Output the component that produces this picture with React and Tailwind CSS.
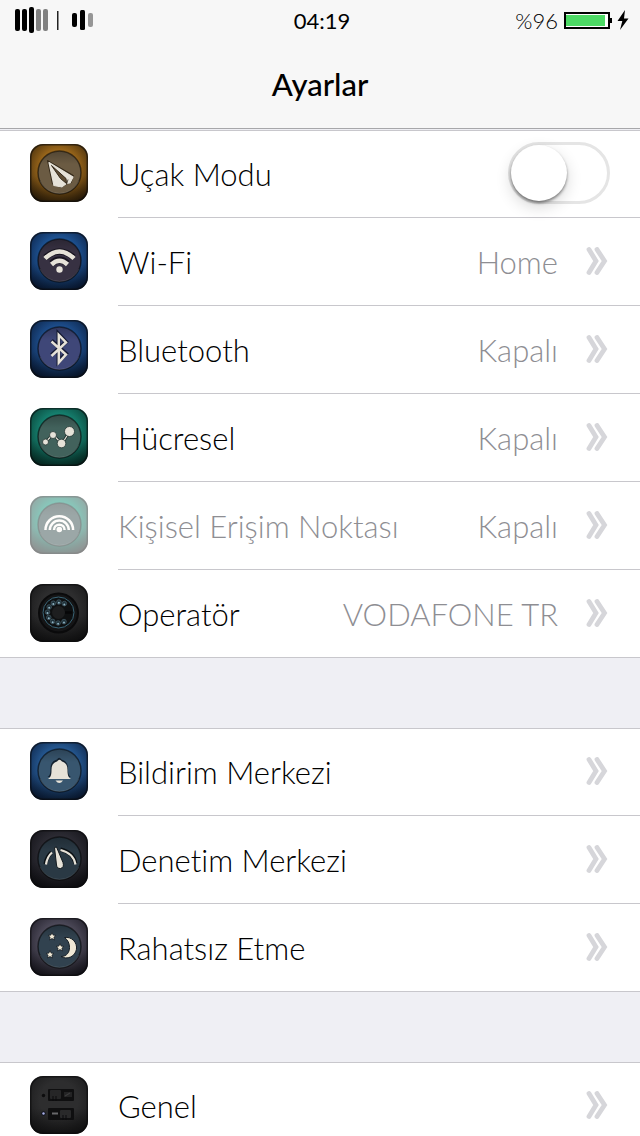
import React from 'react';

const CREAM = '#e6e2d8';

function Tile({ id, outer, edge, disc, ring = true, children }) {
  return (
    <svg viewBox="0 0 58 58" className="size-[58px] shrink-0" aria-hidden="true">
      <defs>
        <radialGradient id={id + '-bg'} cx="50%" cy="42%" r="66%">
          <stop offset="0.5" stopColor={outer} />
          <stop offset="1" stopColor={edge} />
        </radialGradient>
        <linearGradient id={id + '-fade'} x1="0" y1="0" x2="0" y2="1">
          <stop offset="0.55" stopColor="#000" stopOpacity="0" />
          <stop offset="1" stopColor="#000" stopOpacity="0.42" />
        </linearGradient>
        <linearGradient id={id + '-disc'} x1="0" y1="0" x2="0" y2="1">
          <stop offset="0" stopColor="#000" stopOpacity="0.22" />
          <stop offset="0.3" stopColor="#000" stopOpacity="0" />
        </linearGradient>
      </defs>
      <rect width="58" height="58" rx="13" fill={`url(#${id}-bg)`} />
      <rect width="58" height="58" rx="13" fill={`url(#${id}-fade)`} />
      <rect x="0.75" y="0.75" width="56.5" height="56.5" rx="12.5" fill="none" stroke="#0a0a0c" strokeOpacity="0.6" strokeWidth="1.5" />
      {ring && (
        <>
          <circle cx="29.5" cy="28.5" r="21.5" fill={disc} stroke="#000" strokeOpacity="0.55" strokeWidth="1.5" />
          <circle cx="29.5" cy="28.5" r="21" fill={`url(#${id}-disc)`} />
          <path d="M10 37a21.5 21.5 0 0 0 39 0" fill="none" stroke="#fff" strokeOpacity="0.12" strokeWidth="1" />
        </>
      )}
      {children}
    </svg>
  );
}

const dialHoles = [60, 92, 122, 152, 182, 212, 242, 272, 302].map((deg) => {
  const a = (deg * Math.PI) / 180;
  return { cx: 28.5 + 11 * Math.cos(a), cy: 28.5 + 10.5 * Math.sin(a) };
});

const icons = {
  plane: (
    <Tile id="plane" outer="#98651a" edge="#3a260b" disc="#6b5b43">
      <path d="M17.500 16.500 43.500 31.500 41 39 37.500 39.500 31 43.500 22.500 40Z" fill="#2a2012" opacity="0.8" stroke="#2a2012" strokeLinejoin="round" />
      <path d="M19 18.500 43 33 40 39 36.500 39.500 31.500 43 24 41.500Z" fill={CREAM} stroke={CREAM} strokeWidth="1.200" strokeLinejoin="round" />
      <path d="M21.500 21.500 36 34.500 36.500 39.500 30.500 34.500Z" fill="#5e4c33" stroke="#33281a" strokeWidth="1" strokeLinejoin="round" />
      <path d="M36.500 40.500 38 35.500" stroke="#33281a" strokeWidth="0.800" />
    </Tile>
  ),
  wifi: (
    <Tile id="wifi" outer="#1d5190" edge="#0b1f42" disc="#373142">
      <g fill="none" stroke="#17131f" strokeWidth="6.500">
        <path d="M15.500 25.500q14-12 28 0M21.500 31.500q8-7 16 0" />
      </g>
      <g fill="none" stroke={CREAM} strokeWidth="4.500">
        <path d="M15 26.500q14.500-14 29 0M21.500 32.500q8-7.500 16 0" />
      </g>
      <circle cx="29.500" cy="37.500" r="3.200" fill={CREAM} />
    </Tile>
  ),
  bluetooth: (
    <Tile id="bt" outer="#1c4b88" edge="#0a1d3c" disc="#3f4778">
      <path d="M21.500 20.500 36 33.500 28.500 41.500V14L36 22 21.500 35" fill="none" stroke="#151a33" strokeWidth="4" />
      <path d="M21.500 21.500 36 34.500 28.800 42.500V15L36 22.500 21.500 36" fill="none" stroke={CREAM} strokeWidth="2.500" />
    </Tile>
  ),
  cellular: (
    <Tile id="cell" outer="#157e6d" edge="#08392f" disc="#42625c">
      <path d="M15.500 34 23 26.500 32 36 39.500 23.500" fill="none" stroke="#1d2e2b" strokeWidth="2.800" />
      <path d="M15.500 34 23 26.500 32 36 39.500 23.500" fill="none" stroke={CREAM} strokeWidth="1.200" />
      <g fill={CREAM} stroke="#243633" strokeWidth="0.800">
        <circle cx="15.500" cy="34" r="3" />
        <circle cx="23" cy="27" r="3.500" />
        <circle cx="31.500" cy="35.500" r="4.300" />
        <circle cx="39.500" cy="23.500" r="5" />
      </g>
    </Tile>
  ),
  hotspot: (
    <Tile id="hot" outer="#149078" edge="#343f3e" disc="#3a5252">
      <g fill="none" stroke="#fffdf8" strokeWidth="2.500">
        <path d="M15.500 34a13.800 13.800 0 0 1 27.600 0M19.800 34a9.500 9.500 0 0 1 19 0M24 34a5.300 5.300 0 0 1 10.600 0" />
      </g>
      <circle cx="29.300" cy="33.500" r="2.800" fill="#fffdf8" />
    </Tile>
  ),
  operator: (
    <Tile id="op" outer="#2d2d2e" edge="#161617" ring={false}>
      <circle cx="28.500" cy="29" r="19.500" fill="#151516" stroke="#0a0a0b" strokeWidth="2" />
      <circle cx="28.500" cy="28.500" r="15.500" fill="#0e1011" stroke="#3a6577" strokeWidth="1" />
      {dialHoles.map((hole) => (
        <g key={hole.cx}>
          <circle cx={hole.cx} cy={hole.cy} r="2.300" fill="#1e3038" stroke="#47606b" strokeWidth="0.700" />
          <circle cx={hole.cx} cy={hole.cy + 0.8} r="1" fill="#8fb4c4" />
        </g>
      ))}
      <circle cx="28.500" cy="28.500" r="6.500" fill="#1d1e1f" />
      <path d="M35 28.500h7" stroke="#060607" strokeWidth="2.500" />
    </Tile>
  ),
  bell: (
    <Tile id="bell" outer="#24568e" edge="#0c2143" disc="#38566f">
      <path d="M17.500 36c2.500-1.500 3-3.500 3-8.500 0-5 2.500-8 6.500-9q2-3.500 4.500 0c4 1 6.500 4 6.500 9 0 5 .5 7 3 8.500Z" fill="#14212e" transform="translate(0 -1)" />
      <path d="M18 37c3-1.800 3.500-4.500 3.500-9 0-5 2-7.500 5.500-8.500q2.500-3.500 5 0c3.500 1 5.500 3.500 5.500 8.500 0 4.500.5 7.200 3.500 9ZM25.500 38.500h7.500q-3.700 5-7.500 0Z" fill={CREAM} />
    </Tile>
  ),
  gauge: (
    <Tile id="gauge" outer="#2b2a32" edge="#121217" disc="#2a3944">
      <path d="M15.500 34q1-7.500 6-11.500M30.500 19.500q13 3 15 14" fill="none" stroke="#0a0f13" strokeWidth="4" />
      <path d="M16 34.500q1-7.500 6-12M30.500 20q13 3 15 14.500" fill="none" stroke={CREAM} strokeWidth="2.200" />
      <path d="M24.500 17.500 26.500 17 33 32.500q1.500 5-2.500 6-3.500.3-4-3.500Z" fill={CREAM} stroke="#10171c" strokeWidth="1" />
    </Tile>
  ),
  moon: (
    <Tile id="moon" outer="#4b4857" edge="#1d1b25" disc="#31424f">
      <path d="M34.500 19.500a10.300 10.300 0 1 1-3.500 19c6 0 8.500-4.500 8.500-9 0-4-1.500-7.500-5-10Z" fill="#efe8d5" stroke="#141c23" strokeWidth="1" />
      <g fill="#efe8d5" stroke="#141c23" strokeWidth="0.800">
        <path d="m22 14.500 1.200 2.600 2.800.3-2.100 1.900.6 2.700-2.500-1.400-2.500 1.400.6-2.700-2.100-1.900 2.800-.3Z" />
        <path d="m30 25.500 1.200 2.600 2.800.3-2.100 1.900.6 2.700-2.500-1.400-2.500 1.400.6-2.700-2.100-1.900 2.800-.3Z" />
        <path d="m20 32.500 1.200 2.600 2.800.3-2.100 1.900.6 2.700-2.500-1.400-2.500 1.400.6-2.700-2.100-1.900 2.800-.3Z" />
      </g>
    </Tile>
  ),
  general: (
    <Tile id="gen" outer="#2d2d2e" edge="#19191a" ring={false}>
      <rect x="18" y="13" width="26" height="12" rx="1" fill="#0f0f10" />
      <rect x="20" y="14" width="11" height="9" rx="1" fill="#262627" />
      <rect x="34" y="16" width="8" height="5" fill="#232324" />
      <rect x="18" y="32" width="26" height="12" rx="1" fill="#0f0f10" />
      <rect x="30" y="34" width="11" height="8" rx="1" fill="#29292a" />
      <path d="M23 20v5M26 20v5M33 39v5M36 39v5" stroke="#0b0b0c" />
      <path d="M35 20l5-3" stroke="#3c3c3e" strokeWidth="1.200" />
      <path d="M22 37.500h6" stroke="#68686a" strokeWidth="2" />
      <circle cx="13.500" cy="19.500" r="1.700" fill="#0c0c0d" />
      <circle cx="13.500" cy="37.500" r="2.200" fill="#10131f" />
      <circle cx="13.500" cy="37.500" r="1.200" fill="#a9b0e6" />
    </Tile>
  ),
};

function Chevrons() {
  return (
    <svg viewBox="0 0 22 30" className="ml-7 h-[30px] w-[22px] shrink-0" aria-hidden="true">
      <path d="M3 2.500 10 14 3 25.500M11 2.500 18.500 14 11 25.500" fill="none" stroke="#d6d6da" strokeWidth="4.800" strokeLinecap="round" />
    </svg>
  );
}

function Row({ icon, label, value, dimmed, toggle }) {
  const name = <span className={'grow ' + (dimmed ? 'text-[#8e8e93]' : 'text-black')}>{label}</span>;
  const line = 'flex h-[88px] min-w-0 grow items-center border-b border-[#c8c7cc] group-last:border-transparent pr-8';
  return (
    <li className="group">
      {toggle ? (
        <label className="flex gap-[30px] pl-[30px]">
          <span className="mt-[14px] h-[58px]">{icons[icon]}</span>
          <span className="flex h-[88px] grow items-center border-b border-[#c8c7cc] pr-[30px]">
            {name}
            <input
              type="checkbox"
              role="switch"
              className="mb-0.5 h-[62px] w-[102px] appearance-none rounded-full border-[3px] border-[#e5e5e5] bg-white before:block before:size-[56px] before:rounded-full before:bg-white before:shadow-[0_6px_16px_rgba(0,0,0,0.16),0_2px_3px_rgba(0,0,0,0.45)] checked:bg-[#4cd964] checked:before:ml-auto"
            />
          </span>
        </label>
      ) : (
        <a href={'#' + icon} className="flex gap-[30px] pl-[30px]">
          <span className={'mt-[14px] h-[58px] ' + (dimmed ? 'opacity-50' : '')}>{icons[icon]}</span>
          <span className={line}>
            {name}
            {value && <span className="text-[#8e8e93]">{value}</span>}
            <Chevrons />
          </span>
        </a>
      )}
    </li>
  );
}

const groups = [
  [
    { icon: 'plane', label: 'Uçak Modu', toggle: true },
    { icon: 'wifi', label: 'Wi-Fi', value: 'Home' },
    { icon: 'bluetooth', label: 'Bluetooth', value: 'Kapalı' },
    { icon: 'cellular', label: 'Hücresel', value: 'Kapalı' },
    { icon: 'hotspot', label: 'Kişisel Erişim Noktası', value: 'Kapalı', dimmed: true },
    { icon: 'operator', label: 'Operatör', value: 'VODAFONE TR' },
  ],
  [
    { icon: 'bell', label: 'Bildirim Merkezi' },
    { icon: 'gauge', label: 'Denetim Merkezi' },
    { icon: 'moon', label: 'Rahatsız Etme' },
  ],
  [{ icon: 'general', label: 'Genel' }],
];

function StatusBar() {
  return (
    <div className="grid h-10 grid-cols-3 items-center pr-[11px] pl-[15px] text-[22px]">
      <svg viewBox="0 0 80 28" className="h-7 w-20" role="img" aria-label="Signal">
        <rect x="0" y="3" width="5" height="22" rx="2" />
        <rect x="7" y="3" width="5" height="22" rx="2" />
        <rect x="14" y="1" width="5" height="26" rx="2" />
        <rect x="21" y="3" width="5" height="22" rx="2" fill="#808080" />
        <rect x="28" y="3" width="5" height="22" rx="2" fill="#808080" />
        <rect x="42" y="5" width="1.500" height="19" fill="#222" />
        <rect x="57" y="7" width="5" height="14" rx="2" />
        <rect x="65" y="4" width="5" height="20" rx="1.500" />
        <rect x="73" y="7" width="5" height="14" rx="2" fill="#969696" />
      </svg>
      <time className="text-center font-normal">04:19</time>
      <div className="flex items-center justify-end gap-[6px]">
        <span className="font-light">%96</span>
        <svg viewBox="0 0 65 20" className="h-5 w-[65px]" role="img" aria-label="Charging">
          <rect x="1" y="3" width="44" height="15" fill="#fff" stroke="#000" strokeWidth="2" />
          <rect x="2" y="5" width="39" height="11" fill="#4cd964" />
          <rect x="45" y="8" width="3" height="5" />
          <path d="M61 0 53.500 11h4.800L56 20l8.500-11.500H60Z" />
        </svg>
      </div>
    </div>
  );
}

export default function App() {
  return (
    <div className="flex h-screen flex-col overflow-hidden bg-[#efeff4] font-['Lato','Open_Sans',sans-serif] text-black [font-variant-ligatures:none]">
      <header className="shrink-0 border-b border-[#a7a7aa] bg-[#f7f7f7]">
        <StatusBar />
        <h1 className="flex h-[88px] items-center justify-center text-[31px] font-medium">Ayarlar</h1>
      </header>
      <main className="mt-px flex min-h-0 grow flex-col gap-[70px] overflow-y-auto text-[31px] leading-10 font-light [scrollbar-width:none]">
        {groups.map((rows, i) => (
          <ul key={i} className="shrink-0 bg-white shadow-[inset_0_1px_0_#c8c7cc,inset_0_-1px_0_#c8c7cc]">
            {rows.map((row) => (
              <Row key={row.icon} {...row} />
            ))}
          </ul>
        ))}
      </main>
    </div>
  );
}
